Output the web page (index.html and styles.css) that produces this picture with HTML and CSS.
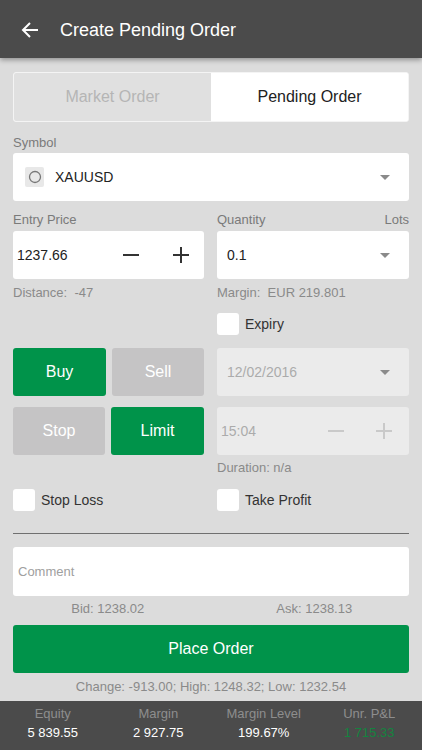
FILE: index.html
```html
<!DOCTYPE html>
<html>
<head>
<meta charset="utf-8">
<link rel="stylesheet" href="styles.css">
</head>
<body>
<header class="topbar">
  <svg class="back" width="18" height="18" viewBox="0 0 18 18"><path d="M17 9H2M9 2L2 9l7 7" fill="none" stroke="#fff" stroke-width="2"/></svg>
  <span class="title">Create Pending Order</span>
</header>
<main class="content">
  <div class="tabs">
    <div class="tab off">Market Order</div>
    <div class="tab on">Pending Order</div>
  </div>
  <div class="label sym-label">Symbol</div>
  <div class="box symbol">
    <span class="sym-icon"><svg width="14" height="14" viewBox="0 0 14 14"><circle cx="7" cy="7" r="5.5" fill="none" stroke="#777" stroke-width="1.3"/></svg></span>
    <span class="sym-text">XAUUSD</span>
    <span class="caret"></span>
  </div>
  <div class="cols">
    <div class="col">
      <div class="label row-label">Entry Price</div>
      <div class="box stepper">
        <span class="val">1237.66</span>
        <svg class="pm minus" width="16" height="16" viewBox="0 0 16 16"><path d="M0 8h16" stroke="#333" stroke-width="2"/></svg>
        <svg class="pm plus" width="16" height="16" viewBox="0 0 16 16"><path d="M0 8h16M8 0v16" stroke="#333" stroke-width="2"/></svg>
      </div>
      <div class="info">Distance:&nbsp; -47</div>
      <div class="spacer-exp"></div>
      <div class="btnrow">
        <div class="btn green">Buy</div>
        <div class="btn gray">Sell</div>
      </div>
      <div class="btnrow second">
        <div class="btn gray">Stop</div>
        <div class="btn green">Limit</div>
      </div>
      <div class="spacer-dur"></div>
      <div class="check"><span class="cb"></span>Stop Loss</div>
    </div>
    <div class="col">
      <div class="label row-label split"><span>Quantity</span><span>Lots</span></div>
      <div class="box select">
        <span class="val">0.1</span>
        <span class="caret"></span>
      </div>
      <div class="info">Margin:&nbsp; EUR 219.801</div>
      <div class="check expiry"><span class="cb"></span>Expiry</div>
      <div class="box select disabled">
        <span class="val dim">12/02/2016</span>
        <span class="caret"></span>
      </div>
      <div class="box stepper disabled second">
        <span class="val dim time">15:04</span>
        <svg class="pm minus" width="16" height="16" viewBox="0 0 16 16"><path d="M0 8h16" stroke="#c9c9c9" stroke-width="2"/></svg>
        <svg class="pm plus" width="16" height="16" viewBox="0 0 16 16"><path d="M0 8h16M8 0v16" stroke="#c9c9c9" stroke-width="2"/></svg>
      </div>
      <div class="info dur">Duration: n/a</div>
      <div class="check"><span class="cb"></span>Take Profit</div>
    </div>
  </div>
  <hr class="divider">
  <div class="box comment">Comment</div>
  <div class="quotes">
    <span>Bid: 1238.02</span>
    <span>Ask: 1238.13</span>
  </div>
  <div class="place">Place Order</div>
  <div class="change">Change: -913.00; High: 1248.32; Low: 1232.54</div>
</main>
<footer class="footer">
  <div class="stat"><span class="k">Equity</span><span class="v">5 839.55</span></div>
  <div class="stat"><span class="k">Margin</span><span class="v">2 927.75</span></div>
  <div class="stat"><span class="k">Margin Level</span><span class="v">199.67%</span></div>
  <div class="stat"><span class="k">Unr. P&amp;L</span><span class="v pos">1 715.33</span></div>
</footer>
</body>
</html>
```
FILE: styles.css
```css
* { box-sizing: border-box; }
html, body { margin: 0; padding: 0; }
body {
  width: 422px;
  height: 750px;
  background: #dcdcdc;
  font-family: "Liberation Sans", Arial, sans-serif;
  color: #333;
  overflow: hidden;
  display: flex;
  flex-direction: column;
}
.topbar {
  height: 58px;
  background: #4b4b4b;
  display: flex;
  align-items: center;
  padding-left: 21px;
  box-shadow: 0 2px 5px rgba(0,0,0,0.35);
  position: relative;
  z-index: 2;
}
.back { display: block; margin-top: 2px; }
.title {
  color: #fff;
  font-size: 18px;
  margin-left: 21px;
  margin-top: 2px;
}
.content {
  flex: 1;
  padding: 14px 13px 0;
}
.tabs {
  display: flex;
  height: 50px;
  border: 1px solid #f4f4f4;
  border-radius: 3px;
  overflow: hidden;
  background: #fff;
}
.tab {
  flex: 1;
  display: flex;
  align-items: center;
  justify-content: center;
  font-size: 16px;
}
.tab.off { background: #e0e0e0; color: #b5b5b5; }
.tab.on { background: #fff; color: #222; }
.label {
  font-size: 13px;
  color: #7a7a7a;
  line-height: 16px;
}
.sym-label { height: 31px; padding-top: 13px; }
.box {
  background: #fff;
  border-radius: 3px;
  height: 48px;
  display: flex;
  align-items: center;
  position: relative;
}
.symbol { padding-left: 12px; }
.sym-icon {
  width: 19px;
  height: 20px;
  background: #e8e8e8;
  border-radius: 2px;
  display: flex;
  align-items: center;
  justify-content: center;
}
.sym-text { font-size: 14px; color: #222; margin-left: 11px; }
.caret {
  position: absolute;
  right: 19px;
  top: 22px;
  width: 0;
  height: 0;
  border-left: 5px solid transparent;
  border-right: 5px solid transparent;
  border-top: 5px solid #8a8a8a;
}
.cols {
  display: flex;
  gap: 13px;
}
.col {
  display: flex;
  flex-direction: column;
}
.col:first-child { width: 191px; }
.col:last-child { width: 192px; }
.row-label { height: 30px; padding-top: 11px; }
.split { display: flex; justify-content: space-between; }
.val { font-size: 14px; color: #222; margin-left: 4px; }
.select .val { margin-left: 10px; }
.val.dim { color: #ababab; }
.val.time { margin-left: 4px; }
.stepper .pm { position: absolute; top: 16px; }
.stepper .minus { left: 110px; }
.stepper .plus { left: 160px; }
.disabled .minus { left: 111px; }
.disabled .plus { left: 159px; }
.box.disabled { background: #ebebeb; }
.info {
  font-size: 13px;
  color: #8a8a8a;
  line-height: 16px;
  height: 26px;
  padding-top: 6px;
}
.info.dur { height: 34px; padding-top: 5px; }
.spacer-exp { height: 43px; }
.spacer-dur { height: 34px; }
.check {
  display: flex;
  align-items: center;
  height: 22px;
  font-size: 14px;
  color: #333;
}
.check.expiry { margin-top: 8px; margin-bottom: 13px; }
.cb {
  width: 22px;
  height: 22px;
  background: #fff;
  border-radius: 3px;
  margin-right: 6px;
}
.btnrow { display: flex; gap: 6px; height: 48px; }
.second { margin-top: 11px; }
.btn {
  flex: 1;
  border-radius: 3px;
  display: flex;
  align-items: center;
  justify-content: center;
  font-size: 16px;
  color: #fff;
}
.btn.green { background: #00934a; }
.btn.gray { background: #c5c4c5; }
.btnrow .btn:first-child { flex: 0 0 93px; }
.btnrow.second .btn:first-child { flex: 0 0 92px; }
.divider {
  border: 0;
  height: 1px;
  background: #6f6f6f;
  margin: 22px 0 13px;
}
.comment {
  height: 49px;
  font-size: 13px;
  color: #a0a0a0;
  padding-left: 5px;
}
.quotes {
  display: flex;
  gap: 13px;
  height: 29px;
  line-height: 26px;
  font-size: 13px;
  color: #8a8a8a;
}
.quotes span { flex: 1; text-align: center; }
.quotes span:first-child { padding-right: 4px; }
.place {
  height: 48px;
  background: #00934a;
  border-radius: 3px;
  color: #fff;
  font-size: 16px;
  display: flex;
  align-items: center;
  justify-content: center;
}
.change {
  height: 27px;
  line-height: 28px;
  text-align: center;
  font-size: 13px;
  color: #8a8a8a;
}
.footer {
  height: 49px;
  background: #4b4b4b;
  display: flex;
}
.stat {
  flex: 1;
  display: flex;
  flex-direction: column;
  align-items: center;
  padding-top: 5px;
}
.stat .k { font-size: 13px; color: #8e8e8e; line-height: 16px; }
.stat .v { font-size: 13px; color: #fff; line-height: 16px; margin-top: 3px; }
.stat .v.pos { color: #13843f; }
```
